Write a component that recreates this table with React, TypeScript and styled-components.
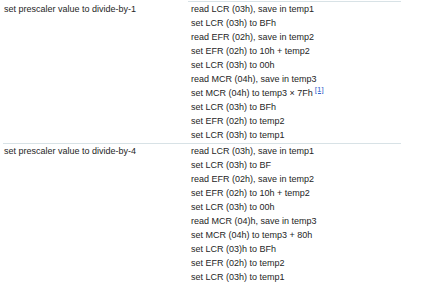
import React from "react";
import styled, { createGlobalStyle } from "styled-components";

const GlobalStyle = createGlobalStyle`
  html, body {
    margin: 0;
    padding: 0;
    background: #fff;
  }
  body {
    font-family: "Liberation Sans", Arial, sans-serif;
    color: #252525;
  }
`;

const Table = styled.div`
  display: flex;
  flex-direction: column;
  width: 398px;
  margin-left: 3px;
  margin-top: 1px;
`;

const Group = styled.div<{ $first?: boolean }>`
  display: grid;
  grid-template-columns: 185px 1fr;
  padding-bottom: 1px;
  border-top: 1px solid ${(p) => (p.$first ? "transparent" : "#d8e2e6")};
`;

const Label = styled.div`
  font-size: 9px;
  line-height: 14px;
  padding-left: 1px;
`;

const Steps = styled.div<{ $first?: boolean }>`
  display: flex;
  flex-direction: column;
  padding-left: 3px;
  margin-top: ${(p) => (p.$first ? "-1px" : "0")};
  border-top: ${(p) => (p.$first ? "1px solid #d8e2e6" : "none")};
`;

const Step = styled.div`
  font-size: 9px;
  line-height: 14px;
  white-space: nowrap;
`;

const Note = styled.sup`
  font-size: 8px;
  line-height: 0;
  margin-left: 2px;
  color: #3366cc;
  text-decoration: underline;
`;

type Block = { label: string; steps: React.ReactNode[] };

const blocks: Block[] = [
  {
    label: "set prescaler value to divide-by-1",
    steps: [
      "read LCR (03h), save in temp1",
      "set LCR (03h) to BFh",
      "read EFR (02h), save in temp2",
      "set EFR (02h) to 10h + temp2",
      "set LCR (03h) to 00h",
      "read MCR (04h), save in temp3",
      <>
        set MCR (04h) to temp3 × 7Fh<Note>[1]</Note>
      </>,
      "set LCR (03h) to BFh",
      "set EFR (02h) to temp2",
      "set LCR (03h) to temp1",
    ],
  },
  {
    label: "set prescaler value to divide-by-4",
    steps: [
      "read LCR (03h), save in temp1",
      "set LCR (03h) to BF",
      "read EFR (02h), save in temp2",
      "set EFR (02h) to 10h + temp2",
      "set LCR (03h) to 00h",
      "read MCR (04)h, save in temp3",
      "set MCR (04h) to temp3 + 80h",
      "set LCR (03)h to BFh",
      "set EFR (02h) to temp2",
      "set LCR (03h) to temp1",
    ],
  },
];

export default function App() {
  return (
    <>
      <GlobalStyle />
      <Table>
        {blocks.map((b, i) => (
          <Group key={i} $first={i === 0}>
            <Label>{b.label}</Label>
            <Steps $first={i === 0}>
              {b.steps.map((s, j) => (
                <Step key={j}>{s}</Step>
              ))}
            </Steps>
          </Group>
        ))}
      </Table>
    </>
  );
}
